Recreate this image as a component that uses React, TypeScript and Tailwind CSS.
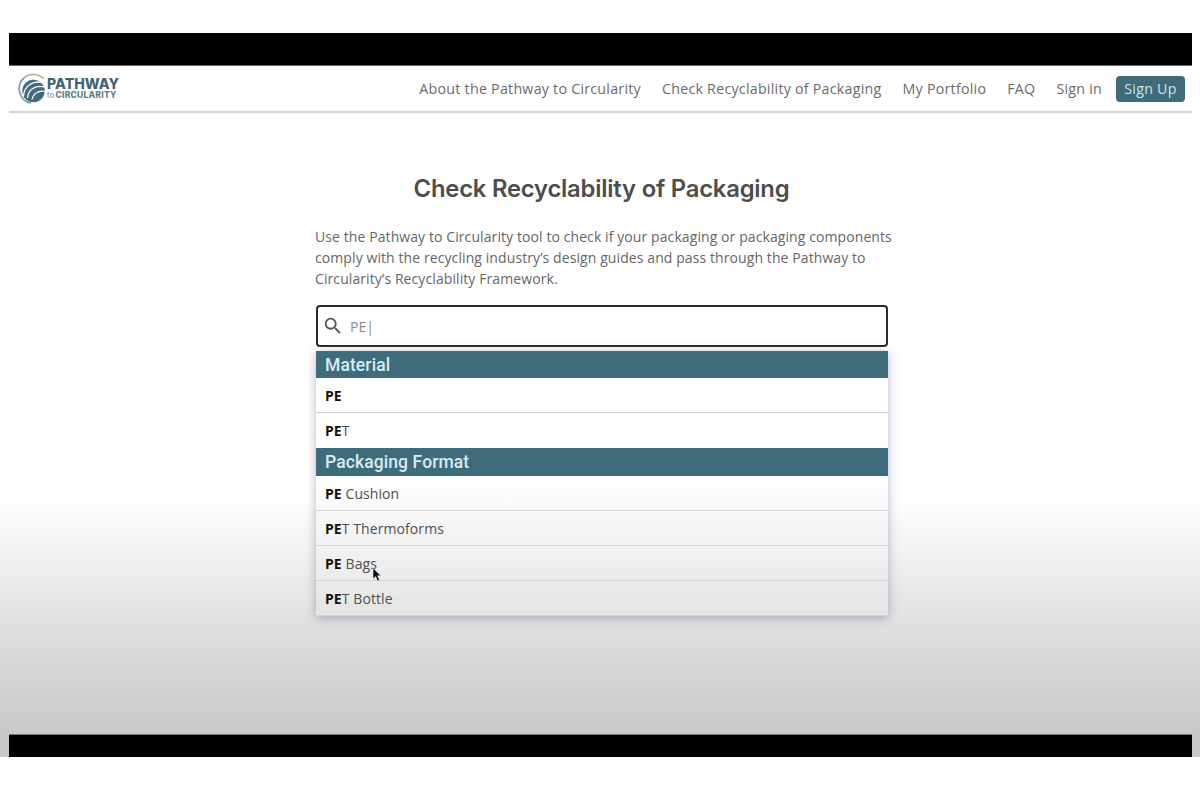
import { MdSearch } from "react-icons/md";

const navLinks = [
  "About the Pathway to Circularity",
  "Check Recyclability of Packaging",
  "My Portfolio",
  "FAQ",
];

function Logo() {
  return (
    <div className="flex items-center">
      <svg width="32" height="33" viewBox="0 0 32 33" fill="none">
        <path d="M26 7A14.5 14.5 0 0 0 6 6" stroke="#b5b58a" strokeWidth="1.7" />
        <path d="M6 6A14.5 14.5 0 0 0 13 31" stroke="#7d9ea8" strokeWidth="1.7" />
        <circle cx="15.5" cy="19" r="11.2" fill="#3f6d7c" />
        <path d="M5.5 24C6 14 15 7.5 26 11" stroke="#ffffff" strokeWidth="1.3" />
        <path d="M9.5 26C10 18 17 12.5 27 15" stroke="#ffffff" strokeWidth="1.3" />
        <path d="M14 27.5C15 22 20 18 27 19.5" stroke="#ffffff" strokeWidth="1.2" />
      </svg>
      <div className="-ml-[3px] -mt-px flex flex-col font-['Inter',sans-serif] font-extrabold text-[#3f6573]">
        <span className="text-[14.1px] leading-[14px] tracking-[0.05px]">PATHWAY</span>
        <span className="flex items-baseline text-[8.5px] leading-[9px] tracking-[0.25px] text-[#5f7f8b]">
          <span className="mr-px text-[7.5px] font-normal">to</span>
          <span>CIRCULARITY</span>
        </span>
      </div>
    </div>
  );
}

function Item({ bold, rest }: { bold: string; rest?: string }) {
  return (
    <div className="flex h-[35px] items-center border-b border-[#d4d4d4] px-[9px] text-[14px] tracking-[0.08px] text-[#4f4f4f] last:border-b-0">
      <span className="whitespace-pre">
        <b className="font-bold text-[#111111]">{bold}</b>
        {rest}
      </span>
    </div>
  );
}

function GroupHeader({ label, tall }: { label: string; tall?: boolean }) {
  return (
    <div
      className={`flex items-center bg-[#3f6b7a] px-[9px] pt-px font-['Roboto',sans-serif] text-[17.5px] font-medium tracking-[0.1px] text-[#d8ecf1] ${
        tall ? "h-[28px]" : "h-[27px]"
      }`}
    >
      {label}
    </div>
  );
}

export default function App() {
  return (
    <div className="h-[799px] w-[1200px] overflow-hidden bg-white font-['Open_Sans',sans-serif]">
      <div className="pt-[33px]">
        <div className="flex h-[724px] flex-col bg-[linear-gradient(to_bottom,#ffffff_0%,#ffffff_64%,#eeeeee_74%,#dcdcdc_84%,#c8c8c8_97%)]">
          <div className="ml-[9px] mr-[8px] h-[33px] shrink-0 border-b border-[#666666] bg-black" />
          <header className="ml-[9px] mr-[8px] flex h-[47px] shrink-0 items-center justify-between border-b-2 border-[#d2d2d2] bg-white pl-[9px] pr-[7px]">
            <Logo />
            <nav className="flex items-center gap-[21px] text-[14.25px] tracking-[0.24px] text-[#6b6b6b]">
              {navLinks.map((link) => (
                <a key={link}>{link}</a>
              ))}
              <div className="flex items-center gap-[14px]">
                <a>Sign in</a>
                <button className="h-[26px] w-[69px] rounded-[4px] bg-[#3f6b7a] text-[#cfe4ea]">Sign Up</button>
              </div>
            </nav>
          </header>
          <main className="flex min-h-0 flex-1 flex-col items-center">
            <h1 className="ml-[3px] mt-[61px] font-['Inter',sans-serif] text-[23.8px] font-semibold leading-[30px] tracking-[-0.2px] text-[#4d4d4d]">
              Check Recyclability of Packaging
            </h1>
            <div className="ml-[4px] mt-[22px] w-[572px]">
              <p className="-ml-px -mr-[8px] text-[14px] leading-[21px] tracking-[0.09px] text-[#666666]">
                Use the Pathway to Circularity tool to check if your packaging or packaging components comply with the
                recycling industry’s design guides and pass through the Pathway to Circularity’s Recyclability
                Framework.
              </p>
              <div className="mt-[16px] flex h-[42px] items-center gap-[6px] rounded-[4px] border-2 border-[#2a2a2a] bg-white pl-[4px]">
                <MdSearch className="h-[22px] w-[22px] text-[#555555]" />
                <span className="text-[14px] text-[#8a8a8a]">PE|</span>
              </div>
              <div className="mt-[4px] overflow-hidden shadow-[0_2px_10px_rgba(90,90,140,0.45)]">
                <GroupHeader label="Material" />
                <div className="bg-white">
                  <Item bold="PE" />
                  <Item bold="PE" rest="T" />
                </div>
                <GroupHeader label="Packaging Format" tall />
                <div className="relative bg-[linear-gradient(to_bottom,#ffffff,#e4e4e4)]">
                  <Item bold="PE" rest=" Cushion" />
                  <Item bold="PE" rest="T Thermoforms" />
                  <Item bold="PE" rest=" Bags" />
                  <Item bold="PE" rest="T Bottle" />
                  <svg className="absolute left-[56px] top-[91px]" width="11" height="15" viewBox="0 0 11 15">
                    <path d="M1 1V12L3.6 9.6L5.6 14L7.6 13L5.6 8.8H9Z" fill="#111111" stroke="#ffffff" strokeWidth="0.5" />
                  </svg>
                </div>
              </div>
            </div>
          </main>
          <div className="ml-[9px] mr-[8px] h-[23px] shrink-0 border-t border-[#777777] bg-black" />
        </div>
      </div>
    </div>
  );
}
